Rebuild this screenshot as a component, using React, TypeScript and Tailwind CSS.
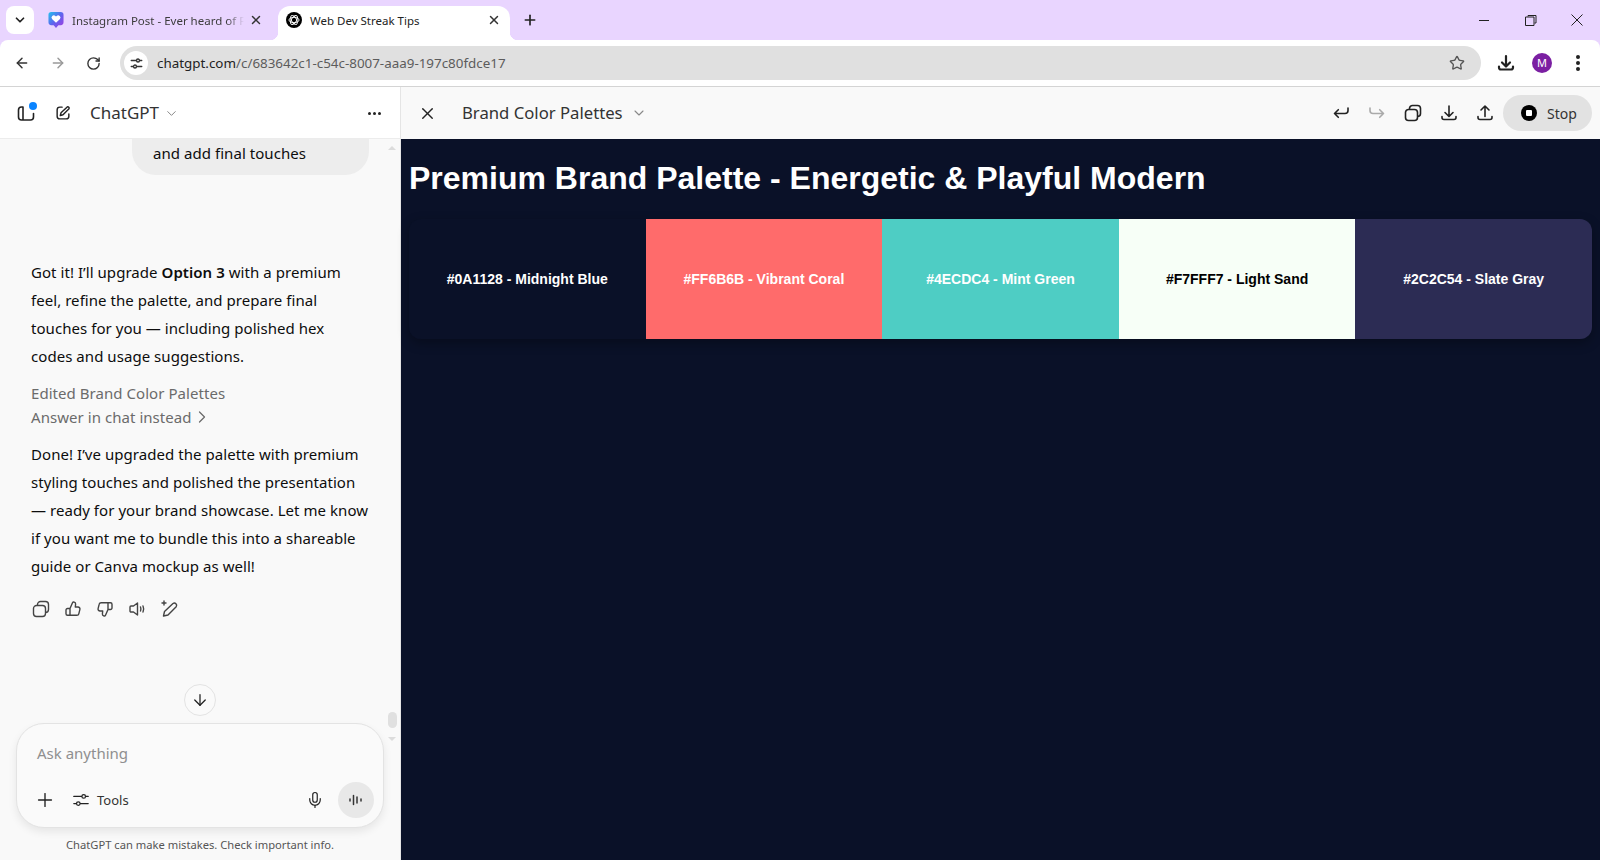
import { ArrowDown, ArrowLeft, ArrowRight, ChevronDown, ChevronRight, Mic, Plus, RotateCw, Star, X } from "lucide-react";

const ui = "font-['Noto_Sans',sans-serif]";

const swatches = [
  { label: "#0A1128 - Midnight Blue", bg: "bg-[#0a1128]", text: "text-white" },
  { label: "#FF6B6B - Vibrant Coral", bg: "bg-[#ff6b6b]", text: "text-white" },
  { label: "#4ECDC4 - Mint Green", bg: "bg-[#4ecdc4]", text: "text-white" },
  { label: "#F7FFF7 - Light Sand", bg: "bg-[#f7fff7]", text: "text-black" },
  { label: "#2C2C54 - Slate Gray", bg: "bg-[#2c2c54]", text: "text-white" },
];

function Icon({ d, size = 20, width = 1.5, className = "" }: { d: string; size?: number; width?: number; className?: string }) {
  return (
    <svg
      width={size}
      height={size}
      viewBox="0 0 20 20"
      fill="none"
      stroke="currentColor"
      strokeWidth={width}
      strokeLinecap="round"
      strokeLinejoin="round"
      className={`shrink-0 ${className}`}
    >
      <path d={d} />
    </svg>
  );
}

const copyPath = "M5.5 6.5h6a3 3 0 0 1 3 3v5a3 3 0 0 1-3 3h-6a3 3 0 0 1-3-3v-5a3 3 0 0 1 3-3zM6.500 6.500V5.500a3 3 0 0 1 3-3h5a3 3 0 0 1 3 3v5a3 3 0 0 1-3 3";
const undoPath = "M17 5v2.500a3 3 0 0 1-3 3H3.500M3.500 10.500l3.800-3.800M3.500 10.500l3.800 3.800";
const redoPath = "M3 5v2.500a3 3 0 0 0 3 3h10.500M16.500 10.500l-3.800-3.800M16.500 10.500l-3.800 3.800";
const downloadPath = "M10 3v10M6 9.500l4 4 4-4M3 13.500v1a2 2 0 0 0 2 2h10a2 2 0 0 0 2-2v-1";
const uploadPath = "M10 13.500V3M6 7l4-4 4 4M3 13.500v1a2 2 0 0 0 2 2h10a2 2 0 0 0 2-2v-1";
const thumbPath =
  "M7 9.500 9.500 3.800c.3-.7 1.100-1 1.800-.7.9.3 1.400 1.200 1.300 2.100L12.300 8H15c1.300 0 2.200 1.200 1.900 2.400l-1.100 4.400c-.2.900-1 1.500-1.900 1.500H7zM7 9.500H4.500C3.700 9.500 3 10.200 3 11v3.800c0 .8.7 1.500 1.500 1.500H7";
const speakerPath = "M10.500 4v12L6.500 13H4a1 1 0 0 1-1-1V8a1 1 0 0 1 1-1h2.500zM13.500 8c.5 1.200.5 2.800 0 4M16 7c.8 1.800.8 4.200 0 6";
const sparklePenPath = "M14 4.500a2.300 2.300 0 0 1 3.200 3.200L9 16l-4.500 1 1-4.500zM5 2v4M3 4h4";
const toolsPath = "M2 6h9M15 6h3M2 14h3M9 14h9M13 4a2 2 0 1 0 0 4 2 2 0 0 0 0-4zM7 12a2 2 0 1 0 0 4 2 2 0 0 0 0-4z";
const sitePath = "M3 6h7M14 6h3M3 14h3M10 14h7M12 4a2 2 0 1 0 0 4 2 2 0 0 0 0-4zM8 12a2 2 0 1 0 0 4 2 2 0 0 0 0-4z";
const sidebarPath = "M7 4H5.500A3 3 0 0 0 2.500 7v7a3 3 0 0 0 3 3h9a3 3 0 0 0 3-3v-3.500M7 4v13";
const editPath = "M9 3.500H6.500a3 3 0 0 0-3 3v7a3 3 0 0 0 3 3h7a3 3 0 0 0 3-3V11M14.700 3.300a1.500 1.500 0 0 1 2 2L10 12l-3 .8.800-3z";

function InstagramFavicon() {
  return (
    <svg width="16" height="16" viewBox="0 0 16 17" className="shrink-0">
      <defs>
        <linearGradient id="fav" x1="0" y1="0" x2="1" y2="1">
          <stop offset="0" stopColor="#22c3ee" />
          <stop offset="0.5" stopColor="#5f63ee" />
          <stop offset="1" stopColor="#a63be0" />
        </linearGradient>
      </defs>
      <path d="M3 0h10a3 3 0 0 1 3 3v8a3 3 0 0 1-3 3h-2.500L8 17l-2.500-3H3a3 3 0 0 1-3-3V3a3 3 0 0 1 3-3z" fill="url(#fav)" />
      <path d="M8 11.500 4 7.700a2.400 2.400 0 0 1 3.400-3.400l.6.600.6-.6A2.400 2.400 0 0 1 12 7.700z" fill="#fff" />
    </svg>
  );
}

function OpenAiFavicon() {
  return (
    <svg width="16" height="16" viewBox="0 0 16 16" className="shrink-0">
      <circle cx="8" cy="8" r="8" fill="#000" />
      <g fill="none" stroke="#fff" strokeWidth="0.9">
        <ellipse cx="8" cy="8" rx="5" ry="2.600" />
        <ellipse cx="8" cy="8" rx="5" ry="2.600" transform="rotate(60 8 8)" />
        <ellipse cx="8" cy="8" rx="5" ry="2.600" transform="rotate(120 8 8)" />
      </g>
    </svg>
  );
}

function TabStrip() {
  return (
    <div className="flex h-10 items-start bg-[#e9d5ff] pl-[6px]">
      <div className="mt-[6px] flex h-[28px] w-[28px] items-center justify-center rounded-lg bg-white">
        <ChevronDown size={14} strokeWidth={3} className="text-[#222]" />
      </div>
      <div className="mt-[6px] ml-[14px] flex h-[28px] items-center">
        <InstagramFavicon />
        <span className="mt-[1px] ml-[8px] w-[172px] overflow-hidden whitespace-nowrap text-[11.5px] text-[#3c3c3c] [mask-image:linear-gradient(to_right,black_90%,transparent)]">
          Instagram Post - Ever heard of F
        </span>
        <X size={14} strokeWidth={2.5} className="ml-[5px] text-[#333]" />
      </div>
      <div className="relative mt-[6px] ml-[15px] flex h-[34px] w-[232px] items-center rounded-t-xl bg-white pb-[6px] pl-[8px] pr-[9px]">
        <div className="absolute bottom-0 left-[-8px] h-[8px] w-[8px] bg-[radial-gradient(circle_at_0_0,transparent_8px,white_8.5px)]" />
        <div className="absolute bottom-0 right-[-8px] h-[8px] w-[8px] bg-[radial-gradient(circle_at_100%_0,transparent_8px,white_8.5px)]" />
        <OpenAiFavicon />
        <span className="mt-[1px] ml-[8px] flex-1 whitespace-nowrap text-[11.5px] text-[#222]">Web Dev Streak Tips</span>
        <X size={14} strokeWidth={2.5} className="text-[#333]" />
      </div>
      <Plus size={16} strokeWidth={2.5} className="mt-[12px] ml-[12px] text-[#222]" />
      <div className="ml-auto flex h-[40px] items-center pr-[17px]">
        <div className="h-px w-[10px] bg-[#222]" />
        <svg width="12" height="12" viewBox="0 0 12 12" className="ml-[36px] text-[#222]" fill="none" stroke="currentColor">
          <path d="M3 2.500V1.500h8V9H9.500M.5 3h8.500v8.500H.5z" />
        </svg>
        <svg width="12" height="12" viewBox="0 0 12 12" className="ml-[34px] text-[#222]" fill="none" stroke="currentColor">
          <path d="M.5.500l11 11M11.500.5l-11 11" />
        </svg>
      </div>
    </div>
  );
}

function AddressBar() {
  return (
    <div className="flex h-[47px] items-center border-b border-[#d4d4d4] bg-[#e9d5ff]">
      <div className="flex h-full w-full items-center rounded-t-lg bg-white">
        <ArrowLeft size={16} strokeWidth={2.2} className="ml-[14px] text-[#333]" />
        <ArrowRight size={16} strokeWidth={2.2} className="ml-[20px] text-[#999]" />
        <RotateCw size={15} strokeWidth={2.2} className="ml-[20px] text-[#333]" />
        <div className="ml-[19px] flex h-[34px] w-[1361px] items-center rounded-full bg-[#e0e0e0] pl-[4px] pr-[16px]">
          <div className="flex h-[24px] w-[24px] items-center justify-center rounded-full bg-white text-[#333]">
            <Icon d={sitePath} size={15} width={1.8} />
          </div>
          <span className="ml-[9px] text-[13.4px] text-[#5c5c5c]">
            <span className="text-[#222]">chatgpt.com</span>/c/683642c1-c54c-8007-aaa9-197c80fdce17
          </span>
          <Star size={16} strokeWidth={2} className="ml-auto text-[#555]" />
        </div>
        <Icon d={downloadPath} size={20} width={2.2} className="ml-[15px] text-[#222]" />
        <div className="ml-[16px] flex h-[20px] w-[20px] items-center justify-center rounded-full bg-[#7b1fa2] text-[11px] text-white">
          M
        </div>
        <div className="ml-[24px] flex flex-col gap-[2px]">
          <div className="h-[4px] w-[4px] rounded-full bg-[#222]" />
          <div className="h-[4px] w-[4px] rounded-full bg-[#222]" />
          <div className="h-[4px] w-[4px] rounded-full bg-[#222]" />
        </div>
      </div>
    </div>
  );
}

function ChatHeader() {
  return (
    <div className="flex h-[52px] shrink-0 items-center border-b border-[#ececec] bg-white pl-[16px] pr-[19px] pt-[1px]">
      <div className="relative">
        <Icon d={sidebarPath} size={20} width={1.6} className="text-[#222]" />
        <div className="absolute -top-[1px] right-[-1px] h-[8px] w-[8px] rounded-full bg-[#0a84ff]" />
      </div>
      <Icon d={editPath} size={18} width={1.6} className="ml-[18px] text-[#222]" />
      <span className="ml-[18px] text-[17px] text-[#333]">ChatGPT</span>
      <ChevronDown size={15} strokeWidth={1.6} className="ml-[5px] text-[#888]" />
      <div className="ml-auto flex gap-[2px]">
        <div className="h-[3px] w-[3px] rounded-full bg-[#222]" />
        <div className="h-[3px] w-[3px] rounded-full bg-[#222]" />
        <div className="h-[3px] w-[3px] rounded-full bg-[#222]" />
      </div>
    </div>
  );
}

function Messages() {
  return (
    <div className="h-[584px] overflow-hidden text-[15px] tracking-[0.05px] text-[#0d0d0d]">
      <div className="ml-[132px] h-[36px] w-[237px] rounded-b-[24px] bg-[#ededed] pl-[21px] leading-[28px]">
        and add final touches
      </div>
      <div className="mt-[83px] pl-[31px] pr-[30px] leading-[28px]">
        <p className="max-w-[330px]">
          Got it! I’ll upgrade <strong className="font-semibold">Option 3</strong> with a premium feel, refine the
          palette, and prepare final touches for you — including polished hex codes and usage suggestions.
        </p>
        <div className="mt-[11px] leading-[24px] text-[#6b6b6b]">
          <div>Edited Brand Color Palettes</div>
          <div className="flex items-center">
            Answer in chat instead <ChevronRight size={20} strokeWidth={1.5} />
          </div>
        </div>
        <p className="mt-[11px]">
          Done! I’ve upgraded the palette with premium styling touches and polished the presentation — ready for your
          brand showcase. Let me know if you want me to bundle this into a shareable guide or Canva mockup as well!
        </p>
        <div className="mt-[19px] flex items-center gap-[12px] text-[#444]">
          <Icon d={copyPath} width={1.4} />
          <Icon d={thumbPath} width={1.4} />
          <Icon d={thumbPath} width={1.4} className="rotate-180" />
          <Icon d={speakerPath} width={1.4} />
          <Icon d={sparklePenPath} width={1.4} />
        </div>
      </div>
    </div>
  );
}

function Composer() {
  return (
    <div className="mx-[16px] h-[105px] rounded-[28px] border border-[#e3e3e3] bg-[#fafafa] shadow-[0_4px_8px_rgba(0,0,0,0.08)]">
      <div className="pl-[20px] pt-[17px] text-[15px] leading-[24px] text-[#8f8f8f]">Ask anything</div>
      <div className="mt-[17px] flex items-center pl-[17px] pr-[9px]">
        <Plus size={22} strokeWidth={1.5} className="text-[#222]" />
        <Icon d={toolsPath} size={18} width={1.4} className="ml-[16px] text-[#222]" />
        <span className="mt-[1px] ml-[7px] text-[13px] text-[#333]">Tools</span>
        <Mic size={18} strokeWidth={1.6} className="ml-auto text-[#222]" />
        <div className="ml-[14px] flex h-[36px] w-[36px] items-center justify-center rounded-full bg-[#e8e8e8]">
          <svg width="16" height="16" viewBox="0 0 16 16" stroke="#333" strokeWidth="1.5" strokeLinecap="round">
            <path d="M2 7v2M5.500 3.500v9M9 5v6M13 7v2" />
          </svg>
        </div>
      </div>
    </div>
  );
}

function ChatPanel() {
  return (
    <div className="flex w-[401px] shrink-0 flex-col border-r border-[#e5e5e5] bg-[#f9f9f9]">
      <ChatHeader />
      <div className="relative flex flex-1">
        <div className="min-w-0 flex-1">
          <Messages />
          <Composer />
          <div className="mt-[9px] text-center text-[11.2px] text-[#555]">ChatGPT can make mistakes. Check important info.</div>
        </div>
        <div className="absolute right-[4px] top-[7px] h-0 w-0 border-x-[4px] border-b-[4px] border-x-transparent border-b-[#dcdcdc]" />
        <div className="absolute right-[3px] top-[573px] h-[16px] w-[9px] rounded-full bg-[#e0e0e0]" />
        <div className="absolute right-[4px] top-[598px] h-0 w-0 border-x-[4px] border-t-[4px] border-x-transparent border-t-[#dcdcdc]" />
        <div className="absolute left-[184px] top-[545px] flex h-[32px] w-[32px] items-center justify-center rounded-full border border-[#e3e3e3] bg-[#fafafa]">
          <ArrowDown size={18} strokeWidth={1.7} className="text-[#222]" />
        </div>
      </div>
    </div>
  );
}

function CanvasHeader() {
  return (
    <div className="flex h-[52px] shrink-0 items-center bg-[#f9f9f9] pl-[17px] pr-[8px]">
      <X size={19} strokeWidth={1.7} className="text-[#222]" />
      <span className="ml-[25px] text-[16.7px] text-[#333]">Brand Color Palettes</span>
      <ChevronDown size={16} strokeWidth={1.6} className="ml-[8px] text-[#888]" />
      <Icon d={undoPath} width={1.6} className="ml-auto text-[#222]" />
      <Icon d={redoPath} width={1.6} className="ml-[16px] text-[#aaa]" />
      <Icon d={copyPath} width={1.6} className="ml-[16px] text-[#222]" />
      <Icon d={downloadPath} width={1.6} className="ml-[16px] text-[#222]" />
      <Icon d={uploadPath} width={1.6} className="ml-[16px] text-[#222]" />
      <div className="ml-[8px] flex h-[36px] w-[89px] items-center rounded-full bg-[#e2e2e2] pl-[18px]">
        <div className="flex h-[16px] w-[16px] items-center justify-center rounded-full bg-black">
          <div className="h-[6px] w-[6px] rounded-[1px] bg-white" />
        </div>
        <span className="ml-[10px] text-[14px] text-[#333]">Stop</span>
      </div>
    </div>
  );
}

function PalettePreview() {
  return (
    <div className="flex-1 bg-[#0a1128] px-[8px] font-['Liberation_Sans',Arial,sans-serif]">
      <h1 className="pt-[21px] text-[32px] font-bold leading-[37px] text-white">
        Premium Brand Palette - Energetic &amp; Playful Modern
      </h1>
      <div className="mt-[22px] flex h-[120px] overflow-hidden rounded-xl shadow-[0_4px_12px_rgba(0,0,0,0.3)]">
        {swatches.map((s) => (
          <div key={s.label} className={`flex flex-1 items-center justify-center text-[14px] font-bold ${s.bg} ${s.text}`}>
            {s.label}
          </div>
        ))}
      </div>
    </div>
  );
}

export default function App() {
  return (
    <div className={`flex h-[860px] w-[1600px] flex-col overflow-hidden ${ui}`}>
      <TabStrip />
      <AddressBar />
      <div className="flex min-h-0 flex-1">
        <ChatPanel />
        <div className="flex min-w-0 flex-1 flex-col">
          <CanvasHeader />
          <PalettePreview />
        </div>
      </div>
    </div>
  );
}
